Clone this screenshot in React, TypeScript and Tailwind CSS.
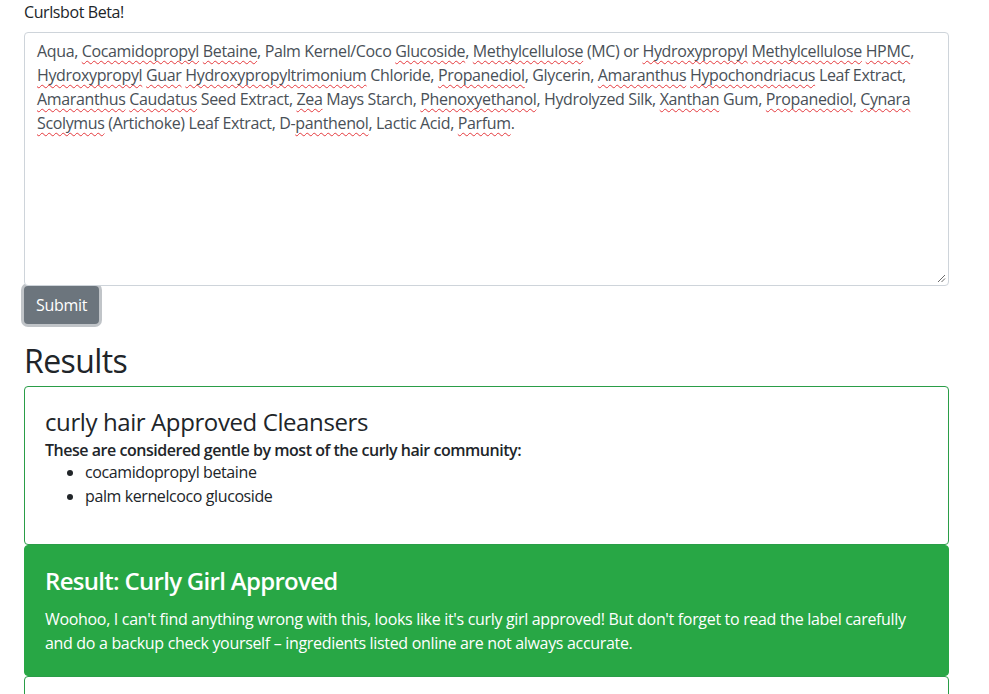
import type { ReactNode } from "react";

const font = "font-['Open_Sans','Noto_Sans',sans-serif]";

function Sq({ children }: { children: ReactNode }) {
  return (
    <span className="underline decoration-wavy decoration-[#e5393d] decoration-1 underline-offset-[3px] [text-decoration-skip-ink:none]">
      {children}
    </span>
  );
}

const lines: ReactNode[] = [
  <>
    Aqua, <Sq>Cocamidopropyl</Sq> <Sq>Betaine</Sq>, Palm Kernel/Coco <Sq>Glucoside</Sq>,{" "}
    <Sq>Methylcellulose</Sq> (MC) or <Sq>Hydroxypropyl</Sq> <Sq>Methylcellulose</Sq> <Sq>HPMC</Sq>,
  </>,
  <>
    <Sq>Hydroxypropyl</Sq> <Sq>Guar</Sq> <Sq>Hydroxypropyltrimonium</Sq> Chloride, <Sq>Propanediol</Sq>,
    Glycerin, <Sq>Amaranthus</Sq> <Sq>Hypochondriacus</Sq> Leaf Extract,
  </>,
  <>
    <Sq>Amaranthus</Sq> <Sq>Caudatus</Sq> Seed Extract, <Sq>Zea</Sq> Mays Starch, <Sq>Phenoxyethanol</Sq>,
    Hydrolyzed Silk, <Sq>Xanthan</Sq> Gum, <Sq>Propanediol</Sq>, <Sq>Cynara</Sq>
  </>,
  <>
    <Sq>Scolymus</Sq> (Artichoke) Leaf Extract, D-<Sq>panthenol</Sq>, Lactic Acid, <Sq>Parfum</Sq>.
  </>,
];

export default function App() {
  return (
    <div className={`${font} w-[949px] pl-6 text-base text-[#212529]`}>
      <p className="leading-6 tracking-[-0.4px]">Curlsbot Beta!</p>

      <div className="relative mt-2 h-[254px] rounded border border-[#ced4da] bg-white px-3 py-1.5 text-[#495057] tracking-[-0.36px]">
        {lines.map((line, i) => (
          <div key={i} className="whitespace-nowrap leading-6">
            {line}
          </div>
        ))}
        <svg className="absolute bottom-[2px] right-[2px]" width="9" height="9" viewBox="0 0 9 9">
          <path d="M1 8 L8 1 M4.5 8 L8 4.5" stroke="#6b6b6b" strokeWidth="1" />
        </svg>
      </div>

      <button
        type="button"
        className="h-[38px] rounded bg-[#6c757d] px-3 text-white shadow-[0_0_0_3px_rgba(130,138,145,0.5)] tracking-[-0.3px]"
      >
        Submit
      </button>

      <h2 className="mt-[18px] mb-[6px] text-[32px] font-medium leading-[38px] tracking-[-0.6px]">Results</h2>

      <section className="rounded border border-[#2a9d48] bg-white p-5">
        <h4 className="mb-1 text-2xl font-medium leading-[29px] tracking-[-0.4px]">
          curly hair Approved Cleansers
        </h4>
        <p className="font-semibold leading-5 tracking-[-0.47px]">
          These are considered gentle by most of the curly hair community:
        </p>
        <ul className="mb-4 list-disc pl-10 leading-6 tracking-[-0.4px]">
          <li>cocamidopropyl betaine</li>
          <li>palm kernelcoco glucoside</li>
        </ul>
      </section>

      <section className="rounded border border-[#28a745] bg-[#28a745] p-5 text-white">
        <h4 className="mb-3 text-2xl font-semibold leading-[29px] tracking-[-0.7px]">
          Result: Curly Girl Approved
        </h4>
        <p className="leading-6 tracking-[-0.32px]">
          Woohoo, I can't find anything wrong with this, looks like it's curly girl approved! But don't forget
          to read the label carefully
          <br />
          and do a backup check yourself – ingredients listed online are not always accurate.
        </p>
      </section>

      <section className="h-[80px] rounded-t border border-[#2a9d48] bg-white" />
    </div>
  );
}
